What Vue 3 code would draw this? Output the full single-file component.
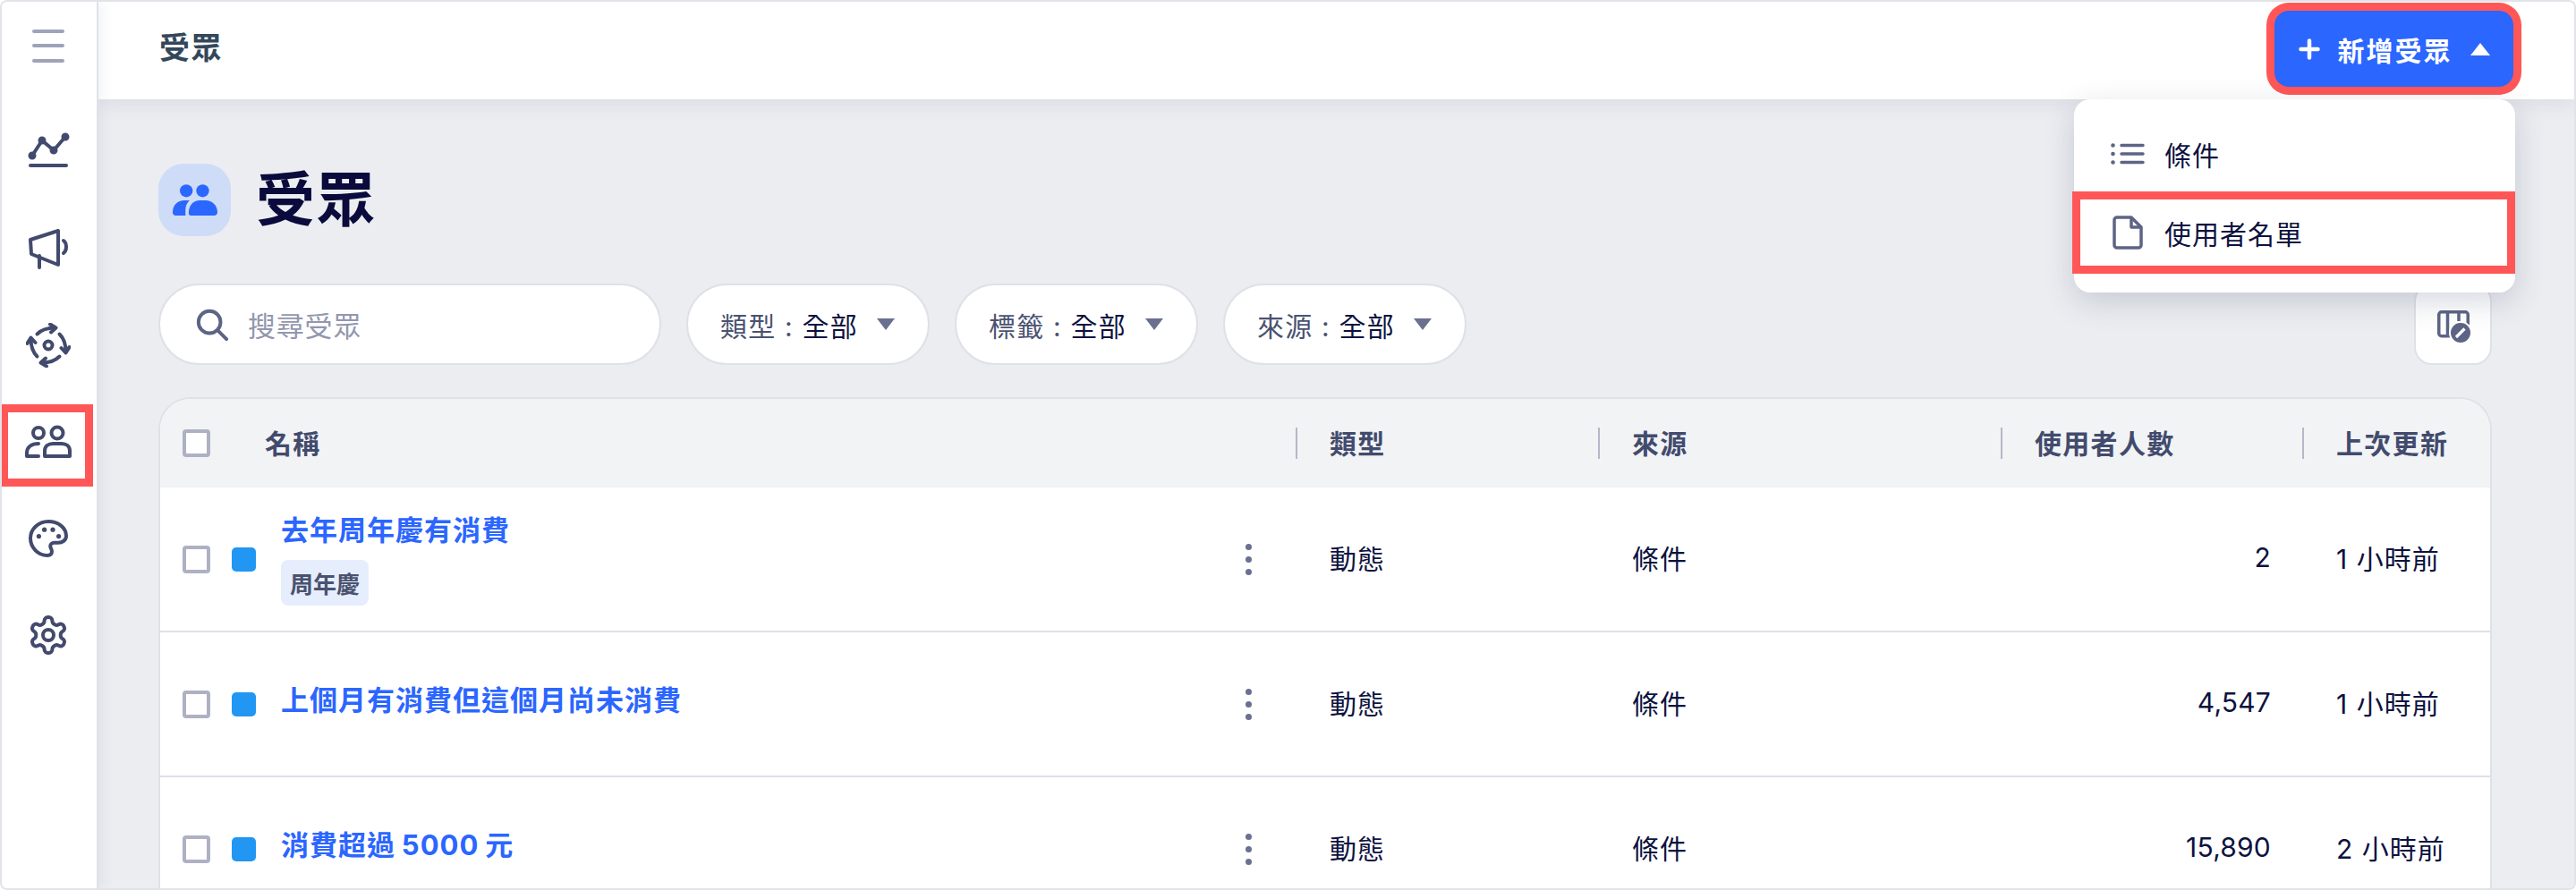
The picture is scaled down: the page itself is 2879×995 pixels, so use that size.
<script setup>
const rows = [
  { name: '去年周年慶有消費', tag: '周年慶', type: '動態', source: '條件', users: '2', updated: '1 小時前' },
  { name: '上個月有消費但這個月尚未消費', type: '動態', source: '條件', users: '4,547', updated: '1 小時前' },
  { name: '消費超過 5000 元', type: '動態', source: '條件', users: '15,890', updated: '2 小時前' },
]
const filters = [
  { label: '類型', value: '全部' },
  { label: '標籤', value: '全部' },
  { label: '來源', value: '全部' },
]
const columns = ['類型', '來源', '使用者人數', '上次更新']
</script>

<template>
  <div class="frame">
    <aside class="sidebar">
      <div class="burger"><i></i><i></i><i></i></div>
      <div class="nav-item">
        <svg width="48" height="48" viewBox="0 0 48 48" fill="none" stroke="#424b6d" stroke-width="4" stroke-linecap="round" stroke-linejoin="round">
          <path d="M6 28 17 11 30 22 43 7" />
          <circle cx="6" cy="28" r="2.500" fill="#424b6d" />
          <circle cx="17" cy="11" r="2.500" fill="#424b6d" />
          <circle cx="30" cy="22" r="2.500" fill="#424b6d" />
          <circle cx="43" cy="7" r="2.500" fill="#424b6d" />
          <path d="M4 39H44" />
        </svg>
      </div>
      <div class="nav-item">
        <svg width="48" height="48" viewBox="0 0 48 48" fill="none" stroke="#424b6d" stroke-width="4" stroke-linecap="round" stroke-linejoin="round">
          <path d="M4 14 35 4V42L5 30Z" />
          <path d="M14 32V45" />
          <path d="M41 15C45 18 45 26 41 29" />
        </svg>
      </div>
      <div class="nav-item">
        <svg width="50" height="50" viewBox="0 0 50 50" fill="none" stroke="#424b6d" stroke-width="4" stroke-linecap="round" stroke-linejoin="round">
          <circle cx="25" cy="25" r="4.500" />
          <g>
            <path d="M12.500 12.500C17 8 24 5.500 32 5.500" />
            <path d="M27 1.500 33.500 5.500 28 10.500" />
          </g>
          <g transform="rotate(90 25 25)">
            <path d="M12.500 12.500C17 8 24 5.500 32 5.500" />
            <path d="M27 1.500 33.500 5.500 28 10.500" />
          </g>
          <g transform="rotate(180 25 25)">
            <path d="M12.500 12.500C17 8 24 5.500 32 5.500" />
            <path d="M27 1.500 33.500 5.500 28 10.500" />
          </g>
          <g transform="rotate(270 25 25)">
            <path d="M12.500 12.500C17 8 24 5.500 32 5.500" />
            <path d="M27 1.500 33.500 5.500 28 10.500" />
          </g>
        </svg>
      </div>
      <div class="nav-item active">
        <svg width="52" height="38" viewBox="0 0 52 38" fill="none" stroke="#424b6d" stroke-width="4" stroke-linecap="round" stroke-linejoin="round">
          <circle cx="15" cy="9" r="6" />
          <circle cx="36" cy="9" r="6.500" />
          <path d="M15 21C7 21 2 25 2 31V35H15" />
          <path d="M22 35V29C22 24 26 21 31 21H41C46 21 50 24 50 29V35Z" />
        </svg>
        <span class="hl hl-nav"></span>
      </div>
      <div class="nav-item">
        <svg width="48" height="48" viewBox="0 0 24 24" fill="none" stroke="#424b6d" stroke-width="2" stroke-linejoin="round">
          <path d="M12 2.500C6.500 2.500 2 6.700 2 11.800S6 21.500 11.500 21.500c1.500 0 2.500-.8 2.500-2.200 0-1.500-.9-1.800-.9-3 0-1.100.9-1.900 2-1.900h2.400c2.600 0 4.500-1.600 4.500-3.800C22 6 17.500 2.500 12 2.500z" />
          <circle cx="6.700" cy="10.800" r="1.300" fill="#424b6d" stroke="none" />
          <circle cx="9.800" cy="7.100" r="1.300" fill="#424b6d" stroke="none" />
          <circle cx="14.500" cy="7.100" r="1.300" fill="#424b6d" stroke="none" />
          <circle cx="17.800" cy="10.800" r="1.300" fill="#424b6d" stroke="none" />
        </svg>
      </div>
      <div class="nav-item">
        <svg width="48" height="48" viewBox="0 0 24 24" fill="none" stroke="#424b6d" stroke-width="2" stroke-linecap="round" stroke-linejoin="round">
          <path d="M12.220 2h-.44a2 2 0 0 0-2 2v.18a2 2 0 0 1-1 1.730l-.43.25a2 2 0 0 1-2 0l-.15-.08a2 2 0 0 0-2.730.73l-.22.38a2 2 0 0 0 .73 2.730l.15.1a2 2 0 0 1 1 1.720v.51a2 2 0 0 1-1 1.740l-.15.09a2 2 0 0 0-.73 2.730l.22.38a2 2 0 0 0 2.730.73l.15-.08a2 2 0 0 1 2 0l.43.25a2 2 0 0 1 1 1.730V20a2 2 0 0 0 2 2h.44a2 2 0 0 0 2-2v-.18a2 2 0 0 1 1-1.730l.43-.25a2 2 0 0 1 2 0l.15.08a2 2 0 0 0 2.730-.73l.22-.39a2 2 0 0 0-.73-2.730l-.15-.08a2 2 0 0 1-1-1.740v-.5a2 2 0 0 1 1-1.740l.15-.09a2 2 0 0 0 .73-2.730l-.22-.38a2 2 0 0 0-2.730-.73l-.15.08a2 2 0 0 1-2 0l-.43-.25a2 2 0 0 1-1-1.730V4a2 2 0 0 0-2-2z" />
          <circle cx="12" cy="12" r="3" />
        </svg>
      </div>
    </aside>

    <div class="main">
      <header class="topbar">
        <div class="topbar-title">受眾</div>
        <button class="add-btn">
          <svg width="24" height="24" viewBox="0 0 24 24" fill="none" stroke="#fff" stroke-width="4.500" stroke-linecap="round"><path d="M12 2.500V21.500M2.500 12H21.500" /></svg>
          <span>新增受眾</span>
          <i class="caret-up"></i>
        </button>
      </header>

      <section class="content">
        <div class="heading">
          <div class="tile">
            <svg width="56" height="42" viewBox="0 0 56 42" fill="#2b66ff">
              <circle cx="17" cy="9" r="8" />
              <circle cx="37.500" cy="9" r="8" />
              <path d="M0 36C0 27 6 21 15 21H21C18 24 16 28 16 33V40H4C1.500 40 0 38.500 0 36Z" />
              <path d="M20 37C20 27 26 21 34 21H41C49 21 56 27 56 36C56 38.500 54 40 52 40H23C21 40 20 39 20 37Z" />
            </svg>
          </div>
          <h1>受眾</h1>
        </div>

        <div class="toolbar">
          <div class="search">
            <svg width="36" height="36" viewBox="0 0 38 38" fill="none" stroke="#5d6485" stroke-width="4.200" stroke-linecap="round"><circle cx="16" cy="16" r="13" /><path d="M26 26 36 36" /></svg>
            <span>搜尋受眾</span>
          </div>
          <div v-for="f in filters" :key="f.label" class="pill">
            <span class="pill-text"><span class="pill-label">{{ f.label }} : </span>{{ f.value }}</span>
            <i class="caret-down"></i>
          </div>
          <div class="tool-btn">
            <svg width="40" height="40" viewBox="0 0 40 40" fill="none" stroke="#5d6485" stroke-width="3.500">
              <rect x="3.750" y="3.750" width="32.500" height="27" rx="3" />
              <path d="M13.500 3V31M26 3V14" />
              <circle cx="28" cy="27" r="12" fill="#5d6485" stroke="#fff" stroke-width="2" />
              <path d="M23 32 32.500 22.500" stroke="#fff" stroke-width="3.200" />
            </svg>
          </div>
        </div>

        <div class="table">
          <div class="row head">
            <div class="cell name-cell">
              <span class="check"></span>
              <span class="name-title">名稱</span>
            </div>
            <div v-for="c in columns" :key="c" class="cell head-cell"><i class="divider"></i><span class="head-text">{{ c }}</span></div>
          </div>
          <div v-for="r in rows" :key="r.name" class="row body">
            <div class="cell name-cell">
              <span class="check"></span>
              <span class="dot"></span>
              <div class="name-col" :class="{ 'no-tag': !r.tag }">
                <a class="link">{{ r.name }}</a>
                <span v-if="r.tag" class="tag">{{ r.tag }}</span>
              </div>
              <span class="kebab"><i></i><i></i><i></i></span>
            </div>
            <div class="cell pad"><span class="shift">{{ r.type }}</span></div>
            <div class="cell pad"><span class="shift">{{ r.source }}</span></div>
            <div class="cell num"><span class="shift">{{ r.users }}</span></div>
            <div class="cell pad"><span class="shift">{{ r.updated }}</span></div>
          </div>
        </div>
      </section>

      <div class="menu">
        <div class="menu-item first">
          <svg width="38" height="24" viewBox="0 0 38 24" fill="none" stroke="#5d6485" stroke-width="3.500" stroke-linecap="round">
            <path d="M12 2.500H36M12 12H36M12 21.500H36" />
            <circle cx="2.500" cy="2.500" r="2.300" fill="#5d6485" stroke="none" />
            <circle cx="2.500" cy="12" r="2.300" fill="#5d6485" stroke="none" />
            <circle cx="2.500" cy="21.500" r="2.300" fill="#5d6485" stroke="none" />
          </svg>
          <span>條件</span>
        </div>
        <div class="menu-item selected">
          <svg width="34" height="38" viewBox="0 0 34 38" fill="none" stroke="#5d6485" stroke-width="3.500" stroke-linejoin="round">
            <path d="M5 2H21L32 13V33C32 35 30.500 36 29 36H5C3.500 36 2 35 2 33V5C2 3 3.500 2 5 2Z" />
            <path d="M21 2V13H32" />
          </svg>
          <span>使用者名單</span>
        </div>
      </div>
    </div>
  </div>
</template>

<style>
html, body { margin: 0; overflow: hidden; background: #fff; }
</style>

<style scoped>
.frame {
  box-sizing: border-box;
  width: 2879px;
  height: 995px;
  display: flex;
  border: 2px solid #e1e3e9;
  border-radius: 8px;
  overflow: hidden;
  font-family: Inter, "Noto Sans CJK TC", sans-serif;
  font-size: 30px;
  color: #0d1240;
  letter-spacing: 1px;
}
.sidebar {
  position: relative;
  z-index: 3;
  flex: 0 0 108px;
  box-sizing: border-box;
  background: #fff;
  border-right: 2px solid #dfe1e8;
  box-shadow: 4px 0 14px rgba(60, 70, 110, 0.07);
  display: flex;
  flex-direction: column;
}
.burger {
  height: 98px;
  margin-bottom: 16px;
  padding-right: 2px;
  display: flex;
  flex-direction: column;
  justify-content: center;
  align-items: center;
  gap: 12.500px;
}
.burger i {
  width: 36px;
  height: 4px;
  border-radius: 2px;
  background: #9ea3b9;
}
.nav-item {
  position: relative;
  height: 108px;
  flex: none;
  padding-right: 2px;
  display: flex;
  align-items: center;
  justify-content: center;
}
.hl {
  position: absolute;
  box-sizing: border-box;
  border: 9px solid #ff5757;
  pointer-events: none;
}
.hl-nav {
  left: -2px;
  top: 12px;
  width: 104px;
  height: 92px;
}
.main {
  position: relative;
  flex: 1;
  min-width: 0;
  background: #ecedf1;
  display: flex;
  flex-direction: column;
}
.topbar {
  position: relative;
  z-index: 2;
  flex: 0 0 109px;
  box-sizing: border-box;
  background: #fff;
  padding: 0 68px 4px;
  display: flex;
  align-items: center;
  justify-content: space-between;
  box-shadow: 0 5px 20px rgba(60, 70, 110, 0.1);
}
.topbar-title {
  font-size: 34px;
  font-weight: 700;
  color: #33475b;
  margin-top: -6px;
  letter-spacing: 1.500px;
}
.add-btn {
  width: 267px;
  height: 85px;
  padding: 0;
  border: 0;
  border-radius: 16px;
  background: #2b66ff;
  box-shadow: 0 0 0 9px #ff5757;
  color: #fff;
  font: inherit;
  font-weight: 700;
  letter-spacing: 2px;
  display: flex;
  align-items: center;
  justify-content: center;
  gap: 20px;
}
.caret-up {
  width: 0;
  height: 0;
  border-left: 11px solid transparent;
  border-right: 11px solid transparent;
  border-bottom: 14px solid #fff;
}
.content {
  flex: 1;
  min-height: 0;
  padding: 72px 92px 0 67px;
}
.heading {
  display: flex;
  align-items: center;
  gap: 28px;
  margin-bottom: 53px;
}
.tile {
  width: 81px;
  height: 81px;
  border-radius: 28px;
  background: #cfdcf7;
  display: flex;
  align-items: center;
  justify-content: center;
}
.tile svg { width: 50px; height: 38px; }
h1 {
  margin: 0;
  font-size: 66px;
  line-height: 81px;
  font-weight: 700;
  color: #0a0a3c;
  letter-spacing: 1.500px;
}
.toolbar {
  display: flex;
  align-items: center;
  gap: 28px;
  margin-bottom: 36px;
}
.search,
.pill,
.tool-btn {
  box-sizing: border-box;
  height: 91px;
  background: #fff;
  border: 2px solid #dfe1e8;
  display: flex;
  align-items: center;
}
.search {
  width: 562px;
  padding-left: 40px;
  gap: 22px;
  border-radius: 46px;
  color: #9297ae;
  font-size: 31px;
  letter-spacing: 0.800px;
}
.pill {
  width: 272px;
  padding-left: 36px;
  border-radius: 46px;
  justify-content: space-between;
  padding-right: 37px;
  letter-spacing: 1.200px;
}
.pill-label { color: #4a5270; }
.caret-down {
  width: 0;
  height: 0;
  border-left: 10px solid transparent;
  border-right: 10px solid transparent;
  border-top: 13px solid #6a7090;
}
.tool-btn {
  width: 87px;
  margin-left: auto;
  padding-top: 5px;
  border-radius: 20px;
  justify-content: center;
}
.table {
  border: 2px solid #dfe1e8;
  border-bottom: 0;
  border-radius: 36px 36px 0 0;
  overflow: hidden;
  background: #fff;
}
.row {
  display: grid;
  grid-template-columns: 1269px 338px 450px 337px 1fr;
}
.head {
  height: 99px;
  background: #f2f3f5;
  font-weight: 700;
  color: #424b6d;
}
.body {
  height: 160px;
  border-bottom: 2px solid #dfe1e8;
}
.cell {
  display: flex;
  align-items: center;
  min-width: 0;
}
.name-cell {
  position: relative;
  padding-left: 25px;
}
.head-cell { gap: 36px; }
.head-text,
.name-title {
  position: relative;
  top: -2px;
  letter-spacing: 1.300px;
}
.divider {
  width: 2px;
  height: 35px;
  background: #b4b8c8;
}
.pad { padding-left: 38px; }
.shift {
  position: relative;
  top: -2px;
}
.num {
  justify-content: flex-end;
  padding-right: 35px;
  letter-spacing: 0.200px;
}
.check {
  flex: none;
  box-sizing: border-box;
  width: 31px;
  height: 31px;
  border: 4.500px solid #adb1c3;
  border-radius: 4px;
  background: #fff;
}
.name-title { margin-left: 61px; }
.dot {
  flex: none;
  width: 27px;
  height: 27px;
  margin-left: 24px;
  border-radius: 5px;
  background: #2196f3;
}
.name-col {
  flex: 1;
  margin-left: 28px;
  margin-bottom: 3px;
  display: flex;
  flex-direction: column;
  align-items: flex-start;
  gap: 10px;
}
.no-tag { margin-bottom: 9px; }
.link {
  font-size: 31px;
  line-height: 46px;
  font-weight: 700;
  color: #2b66ff;
  word-spacing: -1.500px;
}
.tag {
  box-sizing: border-box;
  width: 98px;
  height: 51px;
  border-radius: 8px;
  background: #e6edfc;
  color: #4a5270;
  font-size: 26px;
  font-weight: 700;
  letter-spacing: 0;
  display: flex;
  align-items: center;
  justify-content: center;
}
.kebab {
  flex: none;
  margin-right: 49px;
  display: flex;
  flex-direction: column;
  gap: 7px;
}
.kebab i {
  width: 7px;
  height: 7px;
  border-radius: 50%;
  background: #6a7090;
}
.menu {
  position: absolute;
  z-index: 4;
  top: 109px;
  right: 66px;
  width: 493px;
  height: 216px;
  box-sizing: border-box;
  padding: 12px 0 20px;
  border-radius: 18px;
  background: #fff;
  box-shadow: 0 10px 34px rgba(50, 60, 100, 0.2);
}
.menu-item {
  box-sizing: border-box;
  height: 91px;
  display: flex;
  align-items: center;
  gap: 22px;
  padding-left: 41px;
}
.menu-item svg { flex: none; }
.first { padding-top: 7px; }
.selected {
  margin-left: -2px;
  height: 92px;
  outline: 9px solid #ff5757;
  outline-offset: -9px;
  padding-left: 45px;
  gap: 24px;
}
</style>
